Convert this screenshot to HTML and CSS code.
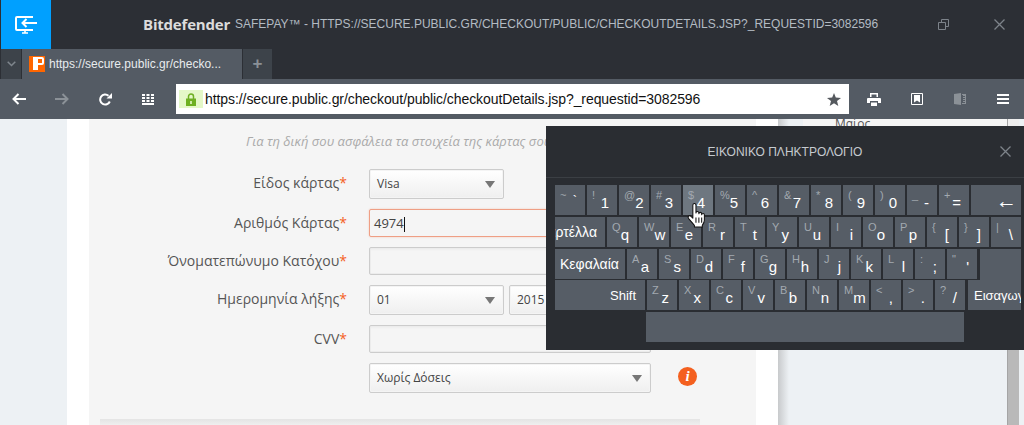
FILE: index.html
```html
<!DOCTYPE html>
<html lang="el">
<head>
    <meta charset="UTF-8">
    <title>Bitdefender Safepay</title>
    <link rel="stylesheet" href="styles.css">
</head>
<body>
    <header class="titlebar">
        <div class="safepay-btn">
            <svg width="22" height="18" viewBox="0 0 22 18" fill="none" stroke="#fff" stroke-width="2">
                <path d="M17 2V1H2a1 1 0 0 0-1 1v11a1 1 0 0 0 1 1h15v-1"/>
                <path d="M7 17h6M10 14v3" stroke-width="1.6"/>
                <path d="M22 7H8M11.500 3 7.500 7l4 4"/>
            </svg>
        </div>
        <div class="brand">Bitdefender</div>
        <div class="window-title">SAFEPAY™ - HTTPS://SECURE.PUBLIC.GR/CHECKOUT/PUBLIC/CHECKOUTDETAILS.JSP?_REQUESTID=3082596</div>
        <div class="window-btns">
            <svg width="11" height="11" viewBox="0 0 11 11" fill="none" stroke="#7d838a">
                <path d="M.5 3.500h7v7h-7zM3.500 3V.5h7v7H8"/>
            </svg>
            <svg width="11" height="11" viewBox="0 0 11 11" fill="none" stroke="#7d838a" stroke-width="1.300">
                <path d="M.5.5l10 10M10.500.5l-10 10"/>
            </svg>
        </div>
    </header>

    <div class="tabstrip">
        <div class="tab-menu">
            <svg width="9" height="6" viewBox="0 0 9 6" fill="none" stroke="#7f868d" stroke-width="1.500"><path d="M.7.7l3.800 3.800L8.300.7"/></svg>
        </div>
        <div class="tab">
            <div class="favicon">
                <svg width="16" height="16" viewBox="0 0 16 16"><path fill="#fff" fill-rule="evenodd" d="M4 1h9a2 2 0 0 1 2 2v4a2 2 0 0 1-2 2H9v5H4zM9 3v4h4V3z"/></svg>
            </div>
            <span class="tab-title">https://secure.public.gr/checko...</span>
        </div>
        <div class="tab-new">+</div>
    </div>

    <nav class="toolbar">
        <div class="tool-group">
            <div class="tool">
                <svg width="14" height="12" viewBox="0 0 14 12" fill="none" stroke="#fff" stroke-width="2"><path d="M14 6H2M6.500 1l-5 5 5 5"/></svg>
            </div>
            <div class="tool">
                <svg width="14" height="12" viewBox="0 0 14 12" fill="none" stroke="#8b9197" stroke-width="2"><path d="M0 6h12M7.500 1l5 5-5 5"/></svg>
            </div>
            <div class="tool">
                <svg width="13" height="13" viewBox="0 0 13 13" fill="none"><path stroke="#fff" stroke-width="2" d="M10.800 8.500A5 5 0 1 1 9.500 2.800"/><path fill="#fff" d="M7.500 5.500H13V0z"/></svg>
            </div>
            <div class="tool">
                <svg width="12" height="11" viewBox="0 0 12 11" fill="#fff"><path d="M0 0h3v2H0zM4.500 0h3v2h-3zM9 0h3v2H9zM0 3h3v2H0zM4.500 3h3v2h-3zM9 3h3v2H9zM0 6h3v2H0zM4.500 6h3v2h-3zM9 6h3v2H9zM0 9h12v2H0z"/></svg>
            </div>
        </div>
        <div class="address">
            <div class="lock">
                <svg width="10" height="13" viewBox="0 0 10 13"><path fill="none" stroke="#6eb022" stroke-width="1.500" d="M2.500 6V3.500a2.500 2.500 0 0 1 5 0V6"/><path fill="#6eb022" d="M0 5.500h10V13H0z"/><path fill="#e4f8c8" d="M4.200 8h1.600v3H4.200z"/></svg>
            </div>
            <span class="url">https://secure.public.gr/checkout/public/checkoutDetails.jsp?_requestid=3082596</span>
            <svg class="star" width="14" height="13" viewBox="0 0 14 13"><path fill="#55595e" d="M7 0l1.800 4.600L14 5l-4 3.100L11.300 13 7 10.300 2.700 13 4 8.100 0 5l5.200-.4z"/></svg>
        </div>
        <div class="tool-group tool-group-right">
            <div class="tool">
                <svg width="14" height="13" viewBox="0 0 14 13" fill="#fff"><path fill-rule="evenodd" d="M3 0h8v4H9.500V1.500h-5V4H3zM1 5h12a1 1 0 0 1 1 1v4h-3V8H3v2H0V6a1 1 0 0 1 1-1z"/><path d="M4 9.500h6V13H4z"/></svg>
            </div>
            <div class="tool">
                <svg width="12" height="12" viewBox="0 0 12 12"><path fill="none" stroke="#fff" d="M.5.5h11v11H.5z"/><path fill="#fff" d="M3 2h6v7.500L6 7.500 3 9.500z"/></svg>
            </div>
            <div class="tool">
                <svg width="12" height="12" viewBox="0 0 12 12" fill="#8b9197"><path d="M0 1l7-1v12l-7-1zM8 1h4v10H8v-1h3V9H9V8h2V7H9V6h2V5H9V4h2V3H9V2H8z"/></svg>
            </div>
            <div class="tool">
                <svg width="12" height="10" viewBox="0 0 12 10" fill="#fff"><path d="M0 0h12v2H0zM0 4h12v2H0zM0 8h12v2H0z"/></svg>
            </div>
        </div>
    </nav>

    <main class="page">
        <div class="gutter"></div>
        <div class="content">
            <section class="panel">
                <p class="note">Για τη δική σου ασφάλεια τα στοιχεία της κάρτας σου δεν αποθηκεύονται</p>
                <div class="form">
                    <label class="label">Είδος κάρτας<span class="req">*</span></label>
                    <div class="field"><div class="select select-small">Visa</div></div>

                    <label class="label">Αριθμός Κάρτας<span class="req">*</span></label>
                    <div class="field"><div class="input input-focus">4974<span class="caret"></span></div></div>

                    <label class="label">Όνοματεπώνυμο Κατόχου<span class="req">*</span></label>
                    <div class="field"><div class="input"></div></div>

                    <label class="label">Ημερομηνία λήξης<span class="req">*</span></label>
                    <div class="field field-date">
                        <div class="select select-small">01</div>
                        <div class="select select-year">2015</div>
                    </div>

                    <label class="label">CVV<span class="req">*</span></label>
                    <div class="field"><div class="input"></div></div>

                    <div></div>
                    <div class="field field-info">
                        <div class="select">Χωρίς Δόσεις</div>
                        <div class="info-icon">i</div>
                    </div>
                </div>
                <div class="panel-shadow"></div>
            </section>
        </div>
        <aside class="sidebar">
            <div class="side-card">Μαίος</div>
        </aside>
        <div class="scrollbar"></div>
        <div class="edge"></div>

        <div class="keyboard">
            <div class="kb-head">
                <span class="kb-title">ΕΙΚΟΝΙΚΟ ΠΛΗΚΤΡΟΛΟΓΙΟ</span>
                <svg class="kb-close" width="11" height="11" viewBox="0 0 11 11" fill="none" stroke="#7d838a" stroke-width="1.300"><path d="M.5.5l10 10M10.500.5l-10 10"/></svg>
            </div>
            <div class="kb-keys">
                <div class="kb-row">
                    <div class="key"><span class="up">~</span><span class="low low-dim">`</span></div>
                    <div class="key"><span class="up">!</span><span class="low">1</span></div>
                    <div class="key"><span class="up">@</span><span class="low">2</span></div>
                    <div class="key"><span class="up">#</span><span class="low">3</span></div>
                    <div class="key key-hover"><span class="up">$</span><span class="low">4</span></div>
                    <div class="key"><span class="up">%</span><span class="low">5</span></div>
                    <div class="key"><span class="up">^</span><span class="low">6</span></div>
                    <div class="key"><span class="up">&amp;</span><span class="low">7</span></div>
                    <div class="key"><span class="up">*</span><span class="low">8</span></div>
                    <div class="key"><span class="up">(</span><span class="low">9</span></div>
                    <div class="key"><span class="up">)</span><span class="low">0</span></div>
                    <div class="key"><span class="up">_</span><span class="low">-</span></div>
                    <div class="key"><span class="up">+</span><span class="low">=</span></div>
                    <div class="key key-back"><span class="low">←</span></div>
                </div>
                <div class="kb-row">
                    <div class="key key-tab">Καρτέλλα</div>
                    <div class="key"><span class="up">Q</span><span class="low">q</span></div>
                    <div class="key"><span class="up">W</span><span class="low">w</span></div>
                    <div class="key"><span class="up">E</span><span class="low">e</span></div>
                    <div class="key"><span class="up">R</span><span class="low">r</span></div>
                    <div class="key"><span class="up">T</span><span class="low">t</span></div>
                    <div class="key"><span class="up">Y</span><span class="low">y</span></div>
                    <div class="key"><span class="up">U</span><span class="low">u</span></div>
                    <div class="key"><span class="up">I</span><span class="low">i</span></div>
                    <div class="key"><span class="up">O</span><span class="low">o</span></div>
                    <div class="key"><span class="up">P</span><span class="low">p</span></div>
                    <div class="key"><span class="up">{</span><span class="low">[</span></div>
                    <div class="key"><span class="up">}</span><span class="low">]</span></div>
                    <div class="key"><span class="up">|</span><span class="low">\</span></div>
                </div>
                <div class="kb-row">
                    <div class="key key-caps">Κεφαλαία</div>
                    <div class="key"><span class="up">A</span><span class="low">a</span></div>
                    <div class="key"><span class="up">S</span><span class="low">s</span></div>
                    <div class="key"><span class="up">D</span><span class="low">d</span></div>
                    <div class="key"><span class="up">F</span><span class="low">f</span></div>
                    <div class="key"><span class="up">G</span><span class="low">g</span></div>
                    <div class="key"><span class="up">H</span><span class="low">h</span></div>
                    <div class="key"><span class="up">J</span><span class="low">j</span></div>
                    <div class="key"><span class="up">K</span><span class="low">k</span></div>
                    <div class="key"><span class="up">L</span><span class="low">l</span></div>
                    <div class="key"><span class="up">:</span><span class="low">;</span></div>
                    <div class="key"><span class="up">"</span><span class="low">'</span></div>
                    <div class="key key-enter-top"></div>
                </div>
                <div class="kb-row kb-row-shift">
                    <div class="key key-shift">Shift</div>
                    <div class="key"><span class="up">Z</span><span class="low">z</span></div>
                    <div class="key"><span class="up">X</span><span class="low">x</span></div>
                    <div class="key"><span class="up">C</span><span class="low">c</span></div>
                    <div class="key"><span class="up">V</span><span class="low">v</span></div>
                    <div class="key"><span class="up">B</span><span class="low">b</span></div>
                    <div class="key"><span class="up">N</span><span class="low">n</span></div>
                    <div class="key"><span class="up">M</span><span class="low">m</span></div>
                    <div class="key"><span class="up">&lt;</span><span class="low">,</span></div>
                    <div class="key"><span class="up">&gt;</span><span class="low">.</span></div>
                    <div class="key"><span class="up">?</span><span class="low">/</span></div>
                    <div class="key key-enter">Εισαγωγή</div>
                </div>
                <div class="kb-row kb-row-space">
                    <div class="key key-space"></div>
                </div>
            </div>
        </div>

        <svg class="hand" width="20" height="26" viewBox="0 0 19 25">
            <path fill="#fff" stroke="#111" stroke-linejoin="round" d="M5.500 2.200c0-2.300 3-2.300 3 0v7.300c0-1.800 2.800-1.800 2.800 0v.8c0-1.700 2.700-1.700 2.700 0v1c0-1.600 2.600-1.600 2.600 0v5.200c0 2-1 3.500-2 5v1.500H7v-1.500L1.500 15c-1.500-2.200.8-3.800 2.500-2l1.500 1.500z"/>
            <path stroke="#111" d="M8.500 14v5M11.300 14v5M14 14v5"/>
        </svg>
    </main>
</body>
</html>
```

FILE: styles.css
```css
:root {
    --chrome-dark: #2c2f35;
    --chrome-mid: #3d434a;
    --chrome: #545b64;
    --key: #565d66;
    --page-blue: #edf1f4;
    --panel: #f5f5f5;
    --border: #cccccc;
    --accent: #f4601f;
}

html, body {
    margin: 0;
    padding: 0;
    height: 425px;
    overflow: hidden;
}

body {
    width: 1024px;
    background-color: white;
    font-family: "Liberation Sans", Arial, sans-serif;
    color: #555;
}

/* top bar */
.titlebar {
    display: flex;
    align-items: flex-start;
    height: 49px;
    background-color: var(--chrome-dark);
}

.safepay-btn {
    display: flex;
    align-items: center;
    justify-content: center;
    width: 50px;
    height: 49px;
    margin-left: 1px;
    background-color: #00a0ff;
}

.brand {
    width: 87px;
    margin-left: 92px;
    line-height: 48px;
    font-family: "Open Sans", sans-serif;
    font-size: 15px;
    font-weight: 700;
    letter-spacing: -0.2px;
    color: #dcdcdc;
}

.window-title {
    margin-left: 5px;
    line-height: 49px;
    font-size: 12px;
    color: #b3bbc3;
    white-space: nowrap;
}

.window-btns {
    display: flex;
    align-items: center;
    gap: 45px;
    height: 48px;
    margin-left: auto;
    padding-right: 19px;
}

/* tabs */
.tabstrip {
    display: flex;
    height: 30px;
    background-color: var(--chrome-dark);
}

.tab-menu {
    display: flex;
    align-items: center;
    justify-content: center;
    width: 20px;
    margin-left: 1px;
    background-color: var(--chrome-mid);
}

.tab {
    display: flex;
    align-items: center;
    width: 213px;
    margin-left: 1px;
    padding-left: 7px;
    background-color: var(--chrome);
}

.favicon {
    width: 16px;
    height: 16px;
    margin-right: 4px;
    background-color: #ff6600;
}

.favicon svg {
    display: block;
}

.tab-title {
    font-size: 12px;
    color: #e8ebee;
    white-space: nowrap;
}

.tab-new {
    width: 29px;
    margin-left: 1px;
    background-color: var(--chrome-mid);
    line-height: 30px;
    text-align: center;
    font-size: 17px;
    font-weight: 700;
    color: #8b9197;
}

/* toolbar */
.toolbar {
    display: flex;
    align-items: center;
    height: 40px;
    background-color: var(--chrome);
}

.tool-group {
    display: flex;
    gap: 5px;
}

.tool-group-right {
    margin-left: 6px;
}

.tool {
    display: flex;
    align-items: center;
    justify-content: center;
    width: 38px;
    height: 30px;
}

.address {
    display: flex;
    align-items: center;
    width: 673px;
    height: 30px;
    margin-left: 9px;
    background-color: white;
}

.lock {
    display: flex;
    align-items: center;
    justify-content: center;
    width: 24px;
    height: 18px;
    margin-left: 3px;
    background-color: #e4f8c8;
}

.url {
    margin-left: 2px;
    font-size: 14px;
    letter-spacing: -0.08px;
    color: #111;
    white-space: nowrap;
}

.star {
    margin-left: auto;
    margin-right: 8px;
}

/* page behind the keyboard */
.page {
    position: relative;
    display: flex;
    height: 306px;
    overflow: hidden;
}

.gutter {
    width: 67px;
    background-color: var(--page-blue);
}

.content {
    box-sizing: border-box;
    width: 711px;
    padding-left: 22px;
    padding-right: 22px;
    background-color: white;
}

.panel {
    height: 306px;
    background-color: var(--panel);
}

.note {
    height: 37px;
    margin: 0 0 0 157px;
    padding-top: 13px;
    font-family: "Open Sans", sans-serif;
    font-size: 13px;
    line-height: 18px;
    font-style: italic;
    color: #aaa;
    white-space: nowrap;
    overflow: hidden;
}

.form {
    display: grid;
    grid-template-columns: 258px 282px;
    column-gap: 22px;
    row-gap: 10px;
}

.label {
    line-height: 28px;
    text-align: right;
    font-family: "Open Sans", sans-serif;
    font-size: 14px;
    color: #555;
    white-space: nowrap;
}

.req {
    color: var(--accent);
}

.field {
    display: flex;
}

.field-date {
    gap: 5px;
}

.field-info {
    position: relative;
}

.input,
.select {
    box-sizing: border-box;
    width: 100%;
    border: 1px solid var(--border);
    border-radius: 2px;
    font-family: "Open Sans", sans-serif;
    font-size: 12px;
    color: #444;
}

.input {
    height: 28px;
    padding-left: 4px;
    line-height: 26px;
    font-size: 13px;
    background-color: #f5f5f5;
    box-shadow: inset 0 0 0 1px #ececec, inset 0 2px 2px rgba(0,0,0,0.03);
}

.input-focus {
    border-color: #ef9f85;
    box-shadow: 0 0 2px #f4c4b4;
}

.caret {
    display: inline-block;
    width: 1px;
    height: 15px;
    vertical-align: middle;
    background-color: #111;
}

.select {
    position: relative;
    height: 30px;
    padding-left: 7px;
    line-height: 28px;
    background: linear-gradient(#fff, #efefef);
    box-shadow: inset 0 0 0 1px #f4f4f4;
}

.select::after {
    content: "";
    position: absolute;
    right: 8px;
    top: 11px;
    border-left: 5px solid transparent;
    border-right: 5px solid transparent;
    border-top: 7px solid #777;
}

.select-small {
    width: 135px;
}

.select-year {
    width: 142px;
}

.info-icon {
    position: absolute;
    left: 309px;
    top: 4px;
    width: 19px;
    height: 19px;
    border-radius: 50%;
    background-color: var(--accent);
    line-height: 19px;
    text-align: center;
    font-family: "Liberation Serif", serif;
    font-size: 15px;
    font-weight: 700;
    font-style: italic;
    color: white;
}

.panel-shadow {
    height: 6px;
    margin: 26px 56px 0 11px;
    background: linear-gradient(#e4e4e4, #efefef);
}

.sidebar {
    flex: 1;
    background: linear-gradient(to right, #c8cacc, var(--page-blue) 11px);
}

.side-card {
    height: 7px;
    margin-left: 25px;
    padding-left: 32px;
    background-color: var(--panel);
    overflow: hidden;
    font-family: "Open Sans", sans-serif;
    font-size: 12px;
    line-height: 10px;
    color: #555;
}

.scrollbar {
    box-sizing: border-box;
    width: 12px;
    background: linear-gradient(#eeeeee 10px, #b9b9b9 10px);
    border-left: 1px solid #a5a5a5;
}

.edge {
    width: 5px;
    background-color: var(--page-blue);
}

/* virtual keyboard */
.keyboard {
    position: absolute;
    left: 546px;
    top: 7px;
    right: 0;
    height: 224px;
    background-color: #2a2d32;
}

.kb-head {
    display: flex;
    align-items: center;
    justify-content: center;
    position: relative;
    height: 51px;
    border-bottom: 1px solid #3b3f44;
}

.kb-title {
    font-size: 12px;
    color: #c5cacf;
}

.kb-close {
    position: absolute;
    right: 13px;
    top: 20px;
}

.kb-keys {
    display: flex;
    flex-direction: column;
    gap: 2px;
    padding: 7px 0 0 9px;
}

.kb-row {
    display: flex;
    gap: 2px;
}

.kb-row-shift {
    margin-top: -1px;
}

.kb-row-space {
    padding-left: 91px;
}

.key {
    display: flex;
    flex-shrink: 0;
    justify-content: space-between;
    box-sizing: border-box;
    width: 30px;
    height: 30px;
    padding: 4px 8px 3px 5px;
    background-color: var(--key);
    overflow: hidden;
    font-size: 14px;
    color: white;
    white-space: nowrap;
}

.key-hover {
    background-color: #6e7780;
}

.up {
    font-size: 11px;
    line-height: 13px;
    color: #a2a9b0;
}

.low {
    align-self: flex-end;
    font-size: 15px;
    line-height: 18px;
}

.low-dim {
    font-size: 13px;
    align-self: flex-start;
    margin-top: 3px;
}

.key-back {
    justify-content: flex-end;
    width: 50px;
    padding-right: 4px;
    padding-bottom: 5px;
}

.key-back .low {
    font-size: 21px;
}

.key-tab,
.key-caps,
.key-shift,
.key-enter {
    align-items: center;
    padding-top: 0;
    padding-bottom: 0;
}

.key-tab {
    width: 50px;
    justify-content: flex-end;
    padding-right: 8px;
}

.key-caps {
    width: 70px;
    justify-content: flex-start;
}

.key-shift {
    width: 90px;
    justify-content: flex-end;
    padding-right: 9px;
    font-size: 13px;
}

.key-enter-top {
    width: 41px;
    height: 31px;
    margin-left: 1px;
    margin-bottom: -1px;
}

.key-enter {
    width: 53px;
    margin-left: 1px;
    justify-content: flex-start;
    padding-left: 6px;
    padding-right: 0;
    font-size: 13px;
}

.key-space {
    width: 318px;
}

.hand {
    position: absolute;
    left: 687px;
    top: 84px;
}
```
